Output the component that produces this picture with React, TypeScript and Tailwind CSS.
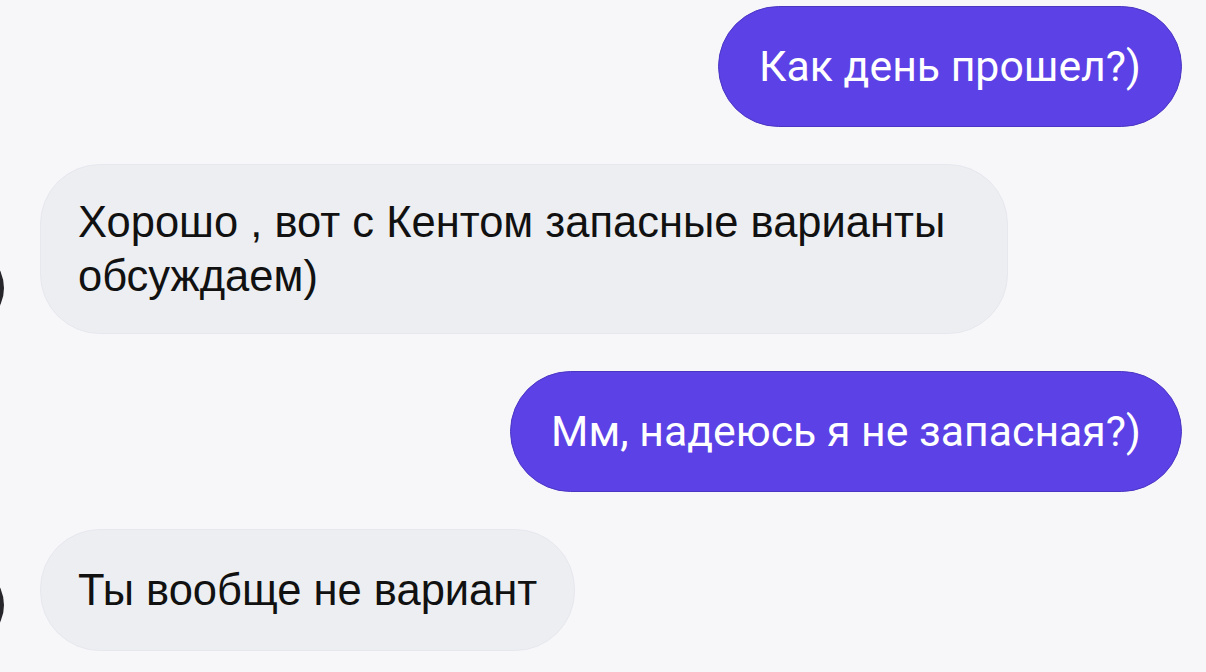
const messages = [
  { id: 1, mine: true, text: "Как день прошел?)" },
  { id: 2, mine: false, text: "Хорошо , вот с Кентом запасные варианты обсуждаем)" },
  { id: 3, mine: true, text: "Мм, надеюсь я не запасная?)" },
  { id: 4, mine: false, text: "Ты вообще не вариант" },
];

function Outgoing({ text }: { text: string }) {
  return (
    <div className="flex justify-end pr-[24px]">
      <div className="h-[121px] flex items-center px-[40px] rounded-full bg-[#5b41e6] border border-[#4b36c4] text-white font-['Roboto',sans-serif] text-[42.8px]">
        {text}
      </div>
    </div>
  );
}

function Incoming({ text }: { text: string }) {
  return (
    <div className="flex items-end overflow-hidden">
      {/* sender avatar, mostly scrolled off the left edge */}
      <div className="shrink-0 w-[80px] h-[80px] -ml-[76px] mb-[6px] rounded-full bg-[#26262b]" />
      <div className="ml-[36px] max-w-[968px] min-h-[122px] flex items-center px-[37px] py-[30px] rounded-[60px] bg-[#eceef2] border border-[#e6e8ee] text-[#111] font-['Liberation_Sans',Arial,sans-serif] text-[43.5px] leading-[54px]">
        {text}
      </div>
    </div>
  );
}

export default function App() {
  return (
    <div className="w-[1206px] h-[672px] bg-[#f7f7f9] overflow-hidden pt-[6px] flex flex-col gap-[37px]">
      {messages.map((m) =>
        m.mine ? <Outgoing key={m.id} text={m.text} /> : <Incoming key={m.id} text={m.text} />
      )}
    </div>
  );
}
